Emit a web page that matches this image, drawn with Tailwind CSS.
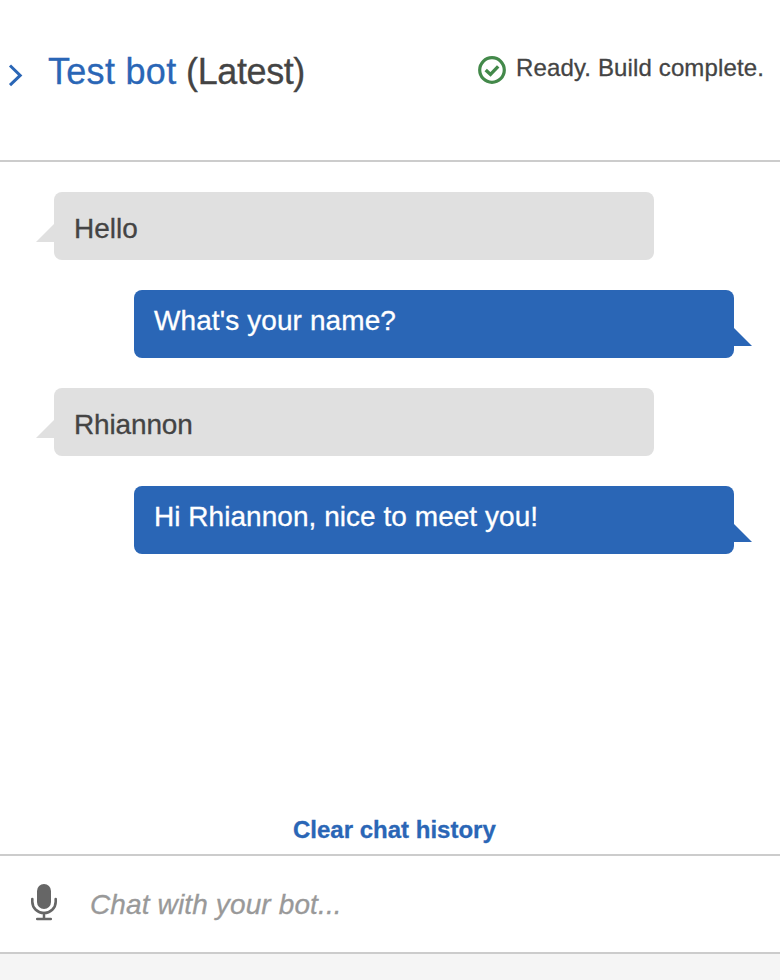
<!DOCTYPE html>
<html lang="en">
<head>
<meta charset="utf-8">
<title>Test bot</title>
<script src="https://cdn.jsdelivr.net/npm/@tailwindcss/browser@4"></script>
</head>
<body class="bg-white">
<div class="flex h-[980px] w-[780px] flex-col overflow-hidden font-['Liberation_Sans',Arial,sans-serif] text-[#444] [-webkit-text-stroke:0.3px]">
  <header class="flex h-[162px] shrink-0 items-start border-b-2 border-[#ccc] pl-2 pr-4">
    <svg class="mt-[63px] h-6 w-4 shrink-0" viewBox="0 0 16 24" fill="none" stroke="#2a66b6" stroke-width="3"><path d="M2 2.5 12.2 12.4 2 22.2"/></svg>
    <h1 class="ml-6 mt-[52px] whitespace-nowrap text-[36px] leading-[40px]"><span class="text-[#2a66b6] tracking-[0.3px]">Test bot</span><span class="tracking-[-0.4px]"> (Latest)</span></h1>
    <div class="ml-auto mt-[52px] flex items-start gap-[10px]">
      <svg class="mt-1 size-7" viewBox="0 0 28 28" fill="none" stroke="#43894a"><circle cx="14" cy="14" r="12.3" stroke-width="3.2"/><path d="M7.7 13.9 12.5 18.4 20.2 10.4" stroke-width="3.4"/></svg>
      <span class="whitespace-nowrap text-[24px] leading-8 tracking-[0.13px]">Ready. Build complete.</span>
    </div>
  </header>
  <main class="flex grow flex-col gap-[30px] pt-[30px] text-[28px] leading-8">
    <div class="relative ml-[54px] h-[68px] w-[600px] rounded-lg bg-[#e0e0e0] px-5 pt-[21px]">Hello
      <svg class="absolute -left-[18px] top-8 h-[18px] w-[18px]" viewBox="0 0 18 18" fill="#e0e0e0"><path d="M18 0V18H0Z"/></svg>
    </div>
    <div class="relative ml-[134px] h-[68px] w-[600px] rounded-lg bg-[#2a66b6] px-5 pt-[15px] tracking-[0.1px] text-white">What's your name?
      <svg class="absolute -right-[18px] top-[38px] h-[18px] w-[18px]" viewBox="0 0 18 18" fill="#2a66b6"><path d="M0 0 18 18H0Z"/></svg>
    </div>
    <div class="relative ml-[54px] h-[68px] w-[600px] rounded-lg bg-[#e0e0e0] px-5 pt-[21px] tracking-[-0.15px]">Rhiannon
      <svg class="absolute -left-[18px] top-8 h-[18px] w-[18px]" viewBox="0 0 18 18" fill="#e0e0e0"><path d="M18 0V18H0Z"/></svg>
    </div>
    <div class="relative ml-[134px] h-[68px] w-[600px] rounded-lg bg-[#2a66b6] px-5 pt-[15px] tracking-[0.04px] text-white">Hi Rhiannon, nice to meet you!
      <svg class="absolute -right-[18px] top-[38px] h-[18px] w-[18px]" viewBox="0 0 18 18" fill="#2a66b6"><path d="M0 0 18 18H0Z"/></svg>
    </div>
  </main>
  <div class="flex h-10 shrink-0 items-start pl-[293px]"><button class="whitespace-nowrap text-[24px] font-bold leading-8 text-[#2a66b6]">Clear chat history</button></div>
  <footer class="flex h-[100px] shrink-0 items-start border-y-2 border-[#ccc] pl-[30px]">
    <svg class="mt-7 h-[38px] w-7" viewBox="0 0 28 38" fill="none" stroke="#666"><rect x="7" y="0" width="14" height="25" rx="7" fill="#666" stroke="none"/><path d="M2.3 15V17.8A11.7 11.2 0 0 0 25.7 17.8V15" stroke-width="2.6" stroke-linecap="round"/><path d="M14 29V34M7.2 35H20.8" stroke-width="2.5" stroke-linecap="round"/></svg>
    <span class="ml-8 mt-[33px] whitespace-nowrap text-[28px] italic leading-8 tracking-[0.13px] text-[#999]">Chat with your bot...</span>
  </footer>
  <div class="h-[26px] shrink-0 bg-[#f5f5f5]"></div>
</div>
</body>
</html>
